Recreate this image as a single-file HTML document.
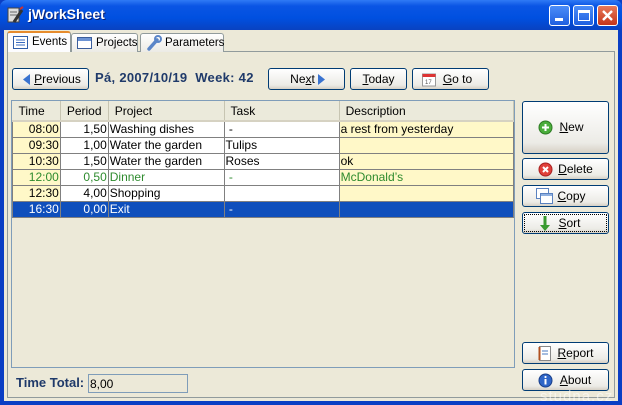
<!DOCTYPE html>
<html><head><style>
*{box-sizing:border-box;margin:0;padding:0}
body{width:622px;height:405px;overflow:hidden;font-family:"Liberation Sans",sans-serif;font-size:12px;position:relative;background:#0A3EC4}
.abs{position:absolute}
.title{left:0;top:0;width:622px;height:30px;background:linear-gradient(#2F7AF5,#0A55E4 20%,#0050E0 60%,#0942C0);border-radius:7px 7px 0 0}
.title span{position:absolute;left:28px;top:6px;color:#fff;font-weight:bold;font-size:14px;text-shadow:1px 1px #0A1E6E}
.win{left:4px;top:30px;width:614px;height:371px;background:#ECE9D8}
.tb{width:21px;height:21px;top:5px;border:1px solid #fff;border-radius:3px;background:linear-gradient(#4C8DF8,#1F5FE0)}
.panel{left:7px;top:51px;width:608px;height:347px;border:1px solid #919B9C;background:#ECE9D8}
.tab{top:33px;height:19px;border:1px solid #919B9C;border-bottom:none;background:linear-gradient(#fff,#ECEBE5);border-radius:3px 3px 0 0;padding:3px 0 0 24px;font-size:11.5px;white-space:nowrap}
.tab.sel{top:31px;height:21px;background:#FCFCFE;border-top:2px solid #E68B2C;z-index:2}
.btn{height:22px;border:1px solid #003C74;border-radius:3px;background:linear-gradient(#FFFFFF,#ECEBE6 80%,#D6D0C5);text-align:center;line-height:20px;font-size:12px}
.btn u{text-decoration:underline}
.grid{left:11px;top:100px;width:504px;height:268px;border:1px solid #7F9DB9;background:#ECE9D8}
table{border-collapse:collapse;position:absolute;left:0;top:0;font-size:12px;table-layout:fixed}
th{height:20px;background:#EBEADB;font-weight:normal;text-align:left;padding-left:6px;border-right:1px solid #C7C5B2;border-bottom:2px solid #D6D2C2}
td{height:16px;border:1px solid #808080;padding:0 1px;white-space:nowrap;line-height:14px;overflow:hidden}
td.r{text-align:right}
.y{background:#FFF8C8}.w{background:#fff}
.g td{color:#2E8B2E}
.s td{background:#0F4FBC;color:#fff}
</style></head><body>
<div class="abs title"><span>jWorkSheet</span>
<svg class="abs" style="left:6px;top:6px" width="18" height="18"><rect x="2" y="2" width="11" height="14" fill="#ddd" stroke="#444"/><line x1="4" y1="6" x2="11" y2="6" stroke="#666"/><line x1="4" y1="9" x2="11" y2="9" stroke="#666"/><path d="M8 16 L16 4" stroke="#333" stroke-width="3"/><path d="M14 3 l3 -2" stroke="#c33" stroke-width="2"/></svg>
<div class="abs tb" style="left:549px"><div class="abs" style="left:5px;top:12px;width:8px;height:3px;background:#fff"></div></div>
<div class="abs tb" style="left:573px"><div class="abs" style="left:4px;top:4px;width:12px;height:11px;border:1px solid #fff;border-top:3px solid #fff"></div></div>
<div class="abs tb" style="left:597px;background:linear-gradient(#E8795A,#C5351A)"><svg width="19" height="19"><path d="M5 5 L14 14 M14 5 L5 14" stroke="#fff" stroke-width="2.4"/></svg></div>
</div>
<div class="abs win"></div>
<div class="abs panel"></div>
<div class="abs tab sel" style="left:7px;width:64px">Events<svg class="abs" style="left:5px;top:3px" width="16" height="14"><rect x="0.5" y="0.5" width="14" height="12" fill="#fff" stroke="#2F5DA8"/><path d="M3 4h9M3 6.5h9M3 9h9" stroke="#3A6BC0"/></svg></div>
<div class="abs tab" style="left:71px;width:67px">Projects<svg class="abs" style="left:5px;top:3px" width="16" height="14"><rect x="0.5" y="0.5" width="14" height="11" fill="#fff" stroke="#3B5E9C"/><rect x="1" y="1" width="13" height="3" fill="#6C93D4"/></svg></div>
<div class="abs tab" style="left:140px;width:84px">Parameters<svg class="abs" style="left:5px;top:1px" width="16" height="16"><path d="M3 14 L11 5" stroke="#5B86C8" stroke-width="3.5" stroke-linecap="round"/><circle cx="12" cy="4" r="3" fill="none" stroke="#5B86C8" stroke-width="2"/></svg></div>

<div class="abs btn" style="left:12px;top:68px;width:77px;padding-left:14px"><u>P</u>revious<svg class="abs" style="left:10px;top:5px" width="8" height="11"><path d="M7 0 L0 5.5 L7 11Z" fill="#3A73D0"/></svg></div>
<div class="abs" style="left:95px;top:70px;color:#1F3A6A;font-weight:bold;font-size:13px;letter-spacing:0.3px">Pá, 2007/10/19 &nbsp;Week: 42</div>
<div class="abs btn" style="left:268px;top:68px;width:77px;padding-right:8px">Ne<u>x</u>t<svg class="abs" style="left:49px;top:5px" width="8" height="11"><path d="M0 0 L7 5.5 L0 11Z" fill="#3A73D0"/></svg></div>
<div class="abs btn" style="left:350px;top:68px;width:57px"><u>T</u>oday</div>
<div class="abs btn" style="left:412px;top:68px;width:77px;padding-left:14px"><u>G</u>o to<svg class="abs" style="left:9px;top:3px" width="14" height="15"><rect x="0.5" y="2" width="13" height="12" fill="#fff" stroke="#999"/><rect x="0.5" y="2" width="13" height="3" fill="#D33"/><text x="3" y="12" font-size="6" fill="#555">17</text></svg></div>

<div class="abs grid"><table>
<colgroup><col style="width:48px"><col style="width:48px"><col style="width:116px"><col style="width:116px"><col style="width:175px"></colgroup>
<tr><th>Time</th><th>Period</th><th>Project</th><th>Task</th><th>Description</th></tr>
<tr><td class="r y">08:00</td><td class="r w">1,50</td><td class="w">Washing dishes</td><td class="w">&nbsp;-</td><td class="y">a rest from yesterday</td></tr>
<tr><td class="r y">09:30</td><td class="r w">1,00</td><td class="w">Water the garden</td><td class="w">Tulips</td><td class="y"></td></tr>
<tr><td class="r y">10:30</td><td class="r w">1,50</td><td class="w">Water the garden</td><td class="w">Roses</td><td class="y">ok</td></tr>
<tr class="g"><td class="r y">12:00</td><td class="r w">0,50</td><td class="w">Dinner</td><td class="w">&nbsp;-</td><td class="y">McDonald’s</td></tr>
<tr><td class="r y">12:30</td><td class="r w">4,00</td><td class="w">Shopping</td><td class="w"></td><td class="y"></td></tr>
<tr class="s"><td class="r">16:30</td><td class="r">0,00</td><td>Exit</td><td>&nbsp;-</td><td></td></tr>
</table></div>

<div class="abs btn" style="left:522px;top:101px;width:87px;height:53px;line-height:51px;padding-left:12px"><u>N</u>ew<svg class="abs" style="left:15px;top:18px" width="15" height="15"><circle cx="7.5" cy="7.5" r="6.5" fill="#4BAE3C" stroke="#2C7A22"/><path d="M4 7.5h7M7.5 4v7" stroke="#fff" stroke-width="2"/></svg></div>
<div class="abs btn" style="left:522px;top:158px;width:87px;padding-left:20px"><u>D</u>elete<svg class="abs" style="left:15px;top:3px" width="15" height="15"><circle cx="7.5" cy="7.5" r="6.5" fill="#E0403A" stroke="#A82020"/><path d="M5 5l5 5M10 5l-5 5" stroke="#fff" stroke-width="2"/></svg></div>
<div class="abs btn" style="left:522px;top:185px;width:87px;padding-left:12px"><u>C</u>opy<svg class="abs" style="left:13px;top:2px" width="18" height="17"><rect x="0.5" y="0.5" width="12" height="10" fill="#fff" stroke="#5A82C0"/><rect x="4.5" y="5.5" width="12" height="10" fill="#fff" stroke="#5A82C0"/><rect x="5" y="6" width="11" height="2" fill="#8FB0E0"/></svg></div>
<div class="abs btn" style="left:522px;top:212px;width:87px;padding-left:8px;outline:1px dotted #000;outline-offset:-3px"><u>S</u>ort<svg class="abs" style="left:17px;top:3px" width="10" height="16"><path d="M5 0v10" stroke="#3A9A30" stroke-width="3"/><path d="M0 9 L5 15 L10 9Z" fill="#3A9A30"/></svg></div>
<div class="abs btn" style="left:522px;top:342px;width:87px;padding-left:20px"><u>R</u>eport<svg class="abs" style="left:15px;top:3px" width="14" height="16"><rect x="1.5" y="0.5" width="11" height="14" fill="#fff" stroke="#888"/><path d="M1.5 1v13" stroke="#B05020" stroke-width="2"/><path d="M4 5h6M4 8h6" stroke="#4A78C0"/></svg></div>
<div class="abs btn" style="left:522px;top:369px;width:87px;padding-left:20px"><u>A</u>bout<svg class="abs" style="left:15px;top:3px" width="15" height="15"><circle cx="7.5" cy="7.5" r="6.5" fill="#2F66C8" stroke="#1A3F8A"/><rect x="6.5" y="6" width="2" height="5.5" fill="#fff"/><circle cx="7.5" cy="4" r="1.1" fill="#fff"/></svg></div>

<div class="abs" style="left:16px;top:375px;color:#1F3A6A;font-weight:bold;font-size:13px">Time Total:</div>
<div class="abs" style="left:88px;top:374px;width:100px;height:19px;border:1px solid #7F9DB9;background:#ECE9D8;padding:2px 1px">8,00</div>
<div class="abs" style="left:540px;top:388px;color:rgba(255,255,255,0.55);font-size:15px;letter-spacing:1px">studna.cz</div>
</body></html>
